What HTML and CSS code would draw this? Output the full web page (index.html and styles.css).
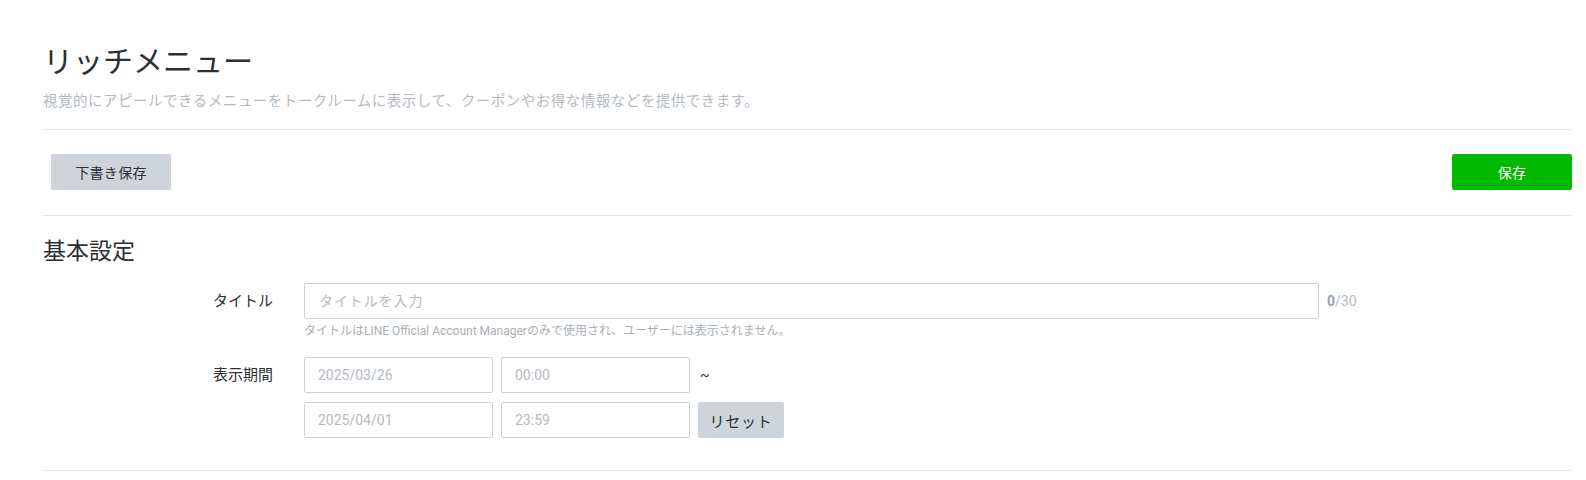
FILE: index.html
```html
<!DOCTYPE html>
<html lang="ja">
<head>
<meta charset="utf-8">
<title>リッチメニュー</title>
<link rel="stylesheet" href="styles.css">
</head>
<body>
<div class="page">
  <header class="page-header">
    <h1 class="page-title">リッチメニュー</h1>
    <p class="page-desc">視覚的にアピールできるメニューをトークルームに表示して、クーポンやお得な情報などを提供できます。</p>
  </header>
  <div class="toolbar">
    <button class="btn btn-gray btn-draft" type="button">下書き保存</button>
    <button class="btn btn-green" type="button">保存</button>
  </div>
  <section class="section">
    <h2 class="section-title">基本設定</h2>
    <div class="form-row">
      <div class="form-label">タイトル</div>
      <div class="form-field">
        <div class="field-line">
          <input class="input input-title" type="text" placeholder="タイトルを入力">
          <span class="counter"><b>0</b>/30</span>
        </div>
        <p class="help">タイトルはLINE Official Account Managerのみで使用され、ユーザーには表示されません。</p>
      </div>
    </div>
    <div class="form-row form-row-period">
      <div class="form-label">表示期間</div>
      <div class="form-field period">
        <div class="field-line">
          <input class="input input-short" type="text" placeholder="2025/03/26">
          <input class="input input-short" type="text" placeholder="00:00">
          <span class="tilde">~</span>
        </div>
        <div class="field-line">
          <input class="input input-short" type="text" placeholder="2025/04/01">
          <input class="input input-short" type="text" placeholder="23:59">
          <button class="btn btn-gray btn-reset" type="button">リセット</button>
        </div>
      </div>
    </div>
  </section>
</div>
</body>
</html>
```

FILE: styles.css
```css
* {
  box-sizing: border-box;
}

html, body {
  margin: 0;
  padding: 0;
  background: #ffffff;
}

body {
  font-family: Roboto, "Noto Sans CJK JP", sans-serif;
  color: #333333;
}

.page {
  padding: 44px 14px 0 43px;
}

.page-header {
  border-bottom: 1px solid #e3e4e6;
  padding-bottom: 17px;
}

.page-title {
  margin: 0;
  font-size: 30px;
  line-height: 36px;
  font-weight: 400;
  color: #2c2f33;
}

.page-desc {
  margin: 12px 0 0;
  font-size: 14.5px;
  line-height: 20px;
  color: #b4bac3;
  letter-spacing: 0.5px;
}

.toolbar {
  display: flex;
  justify-content: space-between;
  align-items: center;
  padding: 24px 0 25px;
  border-bottom: 1px solid #e3e4e6;
}

.btn {
  height: 36px;
  width: 120px;
  border: none;
  border-radius: 2px;
  font-family: Roboto, "Noto Sans CJK JP", sans-serif;
  font-size: 14px;
  letter-spacing: 0.3px;
  cursor: pointer;
  padding: 0;
}

.btn-draft {
  margin-left: 8px;
}

.btn-gray {
  background: #cfd3da;
  color: #2c2f33;
}

.btn-green {
  background: #00b900;
  color: #ffffff;
}

.section {
  padding-top: 21px;
  padding-bottom: 32px;
  border-bottom: 1px solid #e3e4e6;
}

.section-title {
  margin: 0 0 16px;
  font-size: 23px;
  line-height: 30px;
  font-weight: 400;
  color: #2c2f33;
}

.form-row {
  display: flex;
  padding-left: 170px;
}

.form-row-period {
  margin-top: 17px;
}

.form-label {
  width: 91px;
  flex: none;
  font-size: 15px;
  line-height: 36px;
  color: #2c2f33;
}

.form-field {
  display: flex;
  flex-direction: column;
}

.period {
  gap: 9px;
}

.field-line {
  display: flex;
  align-items: center;
  gap: 8px;
}

.input {
  height: 36px;
  border: 1px solid #cdd1d7;
  border-radius: 2px;
  padding: 0 14px;
  font-family: Roboto, "Noto Sans CJK JP", sans-serif;
  font-size: 14px;
  color: #333333;
  outline: none;
  background: #ffffff;
}

.input::placeholder {
  color: #b4bac3;
}

.input-title {
  width: 1015px;
}

.input-title::placeholder {
  letter-spacing: 0.9px;
}

.input-short {
  width: 189px;
  padding-left: 13px;
}

.counter {
  font-size: 14px;
  color: #b4bac3;
}

.counter b {
  color: #9aa1ab;
  font-weight: 700;
}

.help {
  margin: 3px 0 0;
  font-size: 12px;
  line-height: 18px;
  color: #a9afb8;
}

.tilde {
  margin-left: 2px;
  font-size: 14px;
  color: #2c2f33;
}

.btn-reset {
  width: 86px;
  height: 36px;
  font-size: 15px;
  letter-spacing: 0.8px;
}
```
